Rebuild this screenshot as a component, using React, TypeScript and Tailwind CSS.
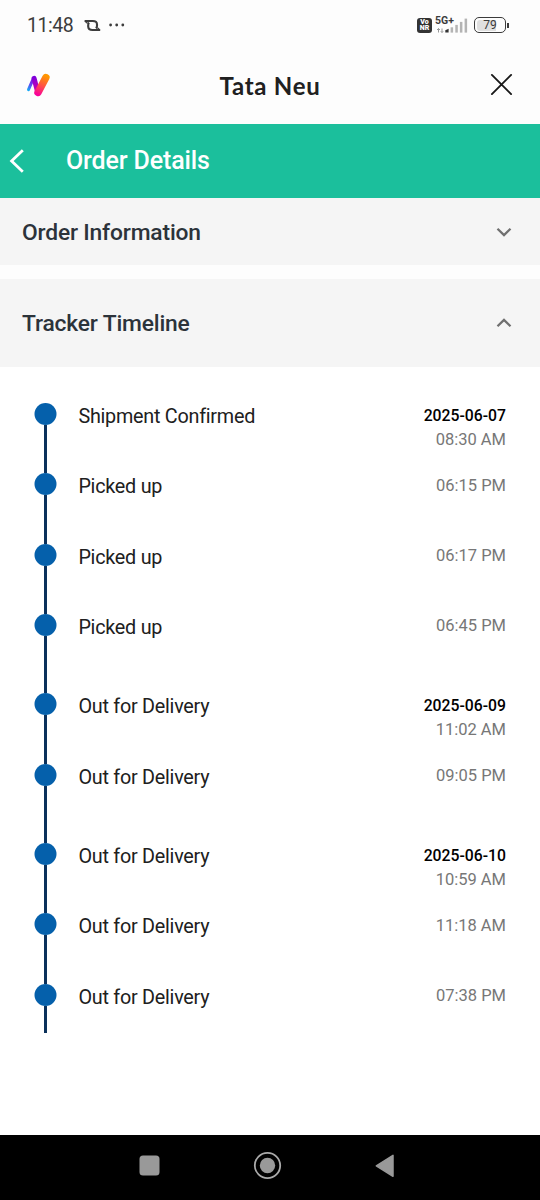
import React from "react";

type Step = { label: string; time: string; date?: string; height: string };

const steps: Step[] = [
  { label: "Shipment Confirmed", date: "2025-06-07", time: "08:30 AM", height: "h-[70.25px]" },
  { label: "Picked up", time: "06:15 PM", height: "h-[70.25px]" },
  { label: "Picked up", time: "06:17 PM", height: "h-[70.25px]" },
  { label: "Picked up", time: "06:45 PM", height: "h-[79.5px]" },
  { label: "Out for Delivery", date: "2025-06-09", time: "11:02 AM", height: "h-[70.25px]" },
  { label: "Out for Delivery", time: "09:05 PM", height: "h-[79.5px]" },
  { label: "Out for Delivery", date: "2025-06-10", time: "10:59 AM", height: "h-[70.25px]" },
  { label: "Out for Delivery", time: "11:18 AM", height: "h-[70.25px]" },
  { label: "Out for Delivery", time: "07:38 PM", height: "h-[49.5px]" },
];

function StatusBar() {
  return (
    <div className="flex h-[50px] items-center pl-[27px] pr-[31px] text-[#3c3c3c]">
      <span className="mt-[2px] w-[47px] text-[19.5px] leading-[24px] tracking-[-0.45px]">11:48</span>
      <svg className="ml-[10px]" width="17" height="13" viewBox="0 0 17 13" fill="none" stroke="#3c3c3c" strokeWidth="2.1" strokeLinejoin="round">
        <path d="M0.6 2H8.8Q13 2 13 5.4V7Q13 8.4 11.8 9.2" />
        <path d="M16.2 11H8.4Q4.2 11 4.2 7.6V6Q4.2 4.6 5.2 3.8" />
        <path d="M1.2 2.2Q2 4.2 5 4.4M15.6 10.8Q14.6 8.8 12 8.6" strokeWidth="1.2" />
      </svg>
      <svg className="ml-[7px]" width="18" height="4" viewBox="0 0 18 4" fill="#3c3c3c">
        <circle cx="2.6" cy="2" r="1.4" />
        <circle cx="8.7" cy="2" r="1.4" />
        <circle cx="14.8" cy="2" r="1.4" />
      </svg>
      <div className="ml-auto flex items-center">
        <div className="flex h-[15px] w-[15px] flex-col items-center justify-center rounded-[3px] bg-[#333333] text-[7px] font-black leading-[6px] text-white">
          <span>Vo</span>
          <span>NR</span>
        </div>
        <div className="relative ml-[4px] h-[17px] w-[33px]">
          <span className="absolute left-[-1px] top-[-2px] text-[10.5px] font-bold leading-[11px] text-[#3c3c3c]">5G+</span>
          <svg className="absolute left-0 top-0" width="33" height="17" viewBox="0 0 33 17">
            <path d="M2.5 15.5V11.5M1 13L2.5 11.5L4 13M6 11.5V15.5M4.8 14.2L6 15.5L7.2 14.2" stroke="#999" strokeWidth="1" fill="none" />
            <path d="M9.3 13.2L12.6 11.8V15.6H9.3Z" fill="#333" />
            <g fill="#b4b4b4">
              <rect x="14.6" y="10.3" width="2.5" height="5.3" />
              <rect x="19.3" y="7.9" width="2.5" height="7.7" />
              <rect x="23.9" y="4.9" width="2.5" height="10.7" />
              <rect x="28.6" y="1.6" width="2.5" height="14" />
            </g>
          </svg>
        </div>
        <div className="ml-[5px] flex h-[16px] w-[32px] items-center justify-center rounded-[5px] border-[1.5px] border-[#3c3c3c] p-[2px]">
          <span className="flex h-[11px] w-full items-center justify-center rounded-[3px] bg-linear-to-r from-[#e0e0e0] from-75% to-[#fdfdfd] to-75% text-[12px] leading-[12px]">79</span>
        </div>
        <div className="ml-[1px] h-[5px] w-[2px] bg-[#3c3c3c]" />
      </div>
    </div>
  );
}

function AppHeader() {
  return (
    <div className="flex h-[74px] items-center justify-between pl-[26px] pr-[27px]">
      <svg className="mt-[-4px]" width="26" height="26" viewBox="0 0 26 26" fill="none" strokeLinecap="round" strokeLinejoin="round">
        <defs>
          <linearGradient id="neuTail" x1="2" y1="18" x2="9" y2="5" gradientUnits="userSpaceOnUse">
            <stop stopColor="#16a8f5" />
            <stop offset="0.45" stopColor="#6a3cf0" />
            <stop offset="1" stopColor="#8500dd" />
          </linearGradient>
          <linearGradient id="neuMid" x1="8" y1="5" x2="12" y2="22" gradientUnits="userSpaceOnUse">
            <stop stopColor="#7c00dc" />
            <stop offset="1" stopColor="#e800a0" />
          </linearGradient>
          <linearGradient id="neuHead" x1="20" y1="4" x2="12" y2="23" gradientUnits="userSpaceOnUse">
            <stop stopColor="#ff9700" />
            <stop offset="0.5" stopColor="#ff5345" />
            <stop offset="1" stopColor="#f9009b" />
          </linearGradient>
        </defs>
        <path d="M2.5 17.6L7.4 6.4" stroke="url(#neuTail)" strokeWidth="3" />
        <path d="M8.1 6.4L11.8 20.5" stroke="url(#neuMid)" strokeWidth="5" />
        <path d="M19.9 5.5L12 20.5" stroke="url(#neuHead)" strokeWidth="7.4" />
      </svg>
      <h1 className="ml-[-2px] mt-[-3px] font-['Lato'] text-[24px] font-bold leading-[30px] tracking-[0.75px] text-[#202020]">Tata Neu</h1>
      <svg className="mt-[-5px]" width="23" height="23" viewBox="0 0 23 23" stroke="#181818" strokeWidth="1.9" strokeLinecap="round">
        <path d="M1.9 1.9L21.1 21.1M21.1 1.9L1.9 21.1" />
      </svg>
    </div>
  );
}

function Chevron({ up = false }: { up?: boolean }) {
  return (
    <svg width="16" height="10" viewBox="0 0 16 10" fill="none" stroke="#707070" strokeWidth="2.3">
      <path d={up ? "M1.5 8.3L8 1.9L14.5 8.3" : "M1.5 1.7L8 8.1L14.5 1.7"} />
    </svg>
  );
}

export default function App() {
  return (
    <div className="flex h-[1200px] w-[540px] flex-col overflow-hidden bg-[#fdfdfd] font-['Roboto',sans-serif]">
      <StatusBar />
      <AppHeader />
      <div className="flex h-[74px] shrink-0 items-center bg-[#1bbf9c] pl-[9px]">
        <svg width="16" height="24" viewBox="0 0 16 24" fill="none" stroke="white" strokeWidth="2.8">
          <path d="M13.8 1.2L2.6 12L13.8 22.8" />
        </svg>
        <h2 className="ml-[41px] text-[25px] font-medium leading-[30px] tracking-[-0.13px] text-white">Order Details</h2>
      </div>
      <section className="flex h-[67px] shrink-0 items-center justify-between bg-[#f5f5f5] pl-[22px] pr-[28px]">
        <h3 className="mt-[2px] text-[22.8px] font-medium leading-[28px] tracking-[-0.17px] text-[#2c333a]">Order Information</h3>
        <Chevron />
      </section>
      <section className="mt-[14px] flex h-[88px] shrink-0 items-center justify-between bg-[#f5f5f5] pl-[22px] pr-[28px]">
        <h3 className="mt-[2px] text-[22.8px] font-medium leading-[28px] tracking-[-0.17px] text-[#2c333a]">Tracker Timeline</h3>
        <Chevron up />
      </section>
      <main className="flex-1 bg-white pl-[34px] pr-[34px] pt-[36px]">
        {steps.map((step, index) => (
          <div key={index} className={`flex ${step.height}`}>
            <div className="flex w-[23px] flex-col items-center">
              <svg className="shrink-0" width="23" height="22" viewBox="0 0 23 22">
                <circle cx="11.5" cy="11" r="11" fill="#0560ab" />
              </svg>
              <div className="w-[3px] flex-1 bg-[#0b315b]" />
            </div>
            <span className="ml-[21.4px] mt-[2.2px] text-[19.8px] leading-[24px] tracking-[-0.25px] text-[#202020]">{step.label}</span>
            <div className="ml-auto mt-[0.6px] flex flex-col items-end leading-[24.5px]">
              {step.date && <span className="text-[15.75px] font-medium text-black">{step.date}</span>}
              <span className="text-[16.5px] text-[#777777]">{step.time}</span>
            </div>
          </div>
        ))}
      </main>
      <nav className="flex h-[65px] shrink-0 items-center bg-black pb-[4px] pl-[139px]">
        <svg width="21" height="21" viewBox="0 0 21 21">
          <rect x="0.5" y="0.5" width="20" height="20" rx="3.5" fill="#999" />
        </svg>
        <svg className="ml-[93px]" width="29" height="29" viewBox="0 0 29 29">
          <circle cx="14.5" cy="14.5" r="12.7" fill="none" stroke="#aaa" strokeWidth="1.8" />
          <circle cx="14.5" cy="14.5" r="7.7" fill="#999" />
        </svg>
        <svg className="ml-[93px]" width="20" height="24" viewBox="0 0 20 24">
          <path d="M18 1.3V22.3L1.3 11.8Z" fill="#999" stroke="#999" strokeWidth="1.5" strokeLinejoin="round" />
        </svg>
      </nav>
    </div>
  );
}
